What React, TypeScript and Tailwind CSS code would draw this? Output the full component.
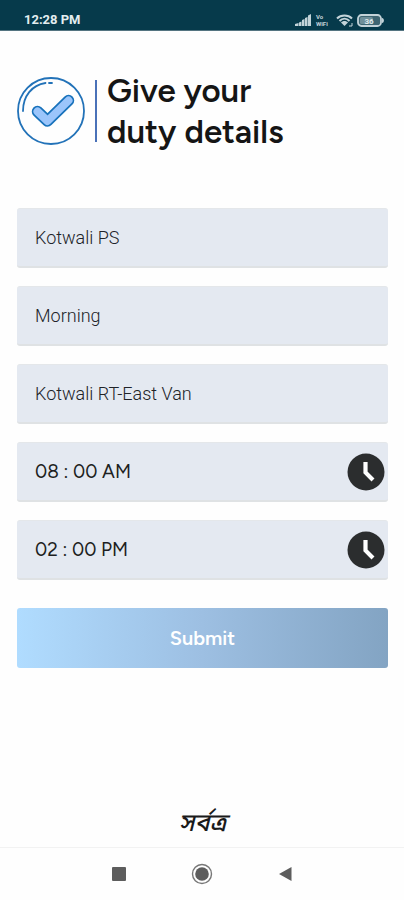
import { useState } from 'react';

interface FieldProps {
  label: string;
  value: string;
  onChange: (value: string) => void;
}

const fieldClass =
  'flex items-center h-[60px] rounded-[3px] bg-[#e4e9f1] border-t border-b-2 border-t-[#e4e7ea] border-b-[#dfe2e4]';

function TextField({ label, value, onChange }: FieldProps) {
  return (
    <div className={fieldClass}>
      <input
        type="text"
        aria-label={label}
        value={value}
        onChange={(event) => onChange(event.target.value)}
        className="w-full h-full pl-[18px] pr-4 bg-transparent outline-none font-[Roboto,sans-serif] text-[18px] font-light text-[#202328]"
      />
    </div>
  );
}

function TimeField({ label, value, onChange }: FieldProps) {
  return (
    <div className={fieldClass}>
      <input
        type="text"
        aria-label={label}
        value={value}
        onChange={(event) => onChange(event.target.value)}
        className="flex-1 min-w-0 h-full pl-[18px] bg-transparent outline-none font-[Figtree,Lato,sans-serif] text-[19px] text-[#1d1f22]"
      />
      <button type="button" aria-label={`Pick ${label}`} className="mr-[3px] cursor-pointer">
        <svg viewBox="0 0 38 38" className="w-[38px] h-[38px]">
          <circle cx="19" cy="19" r="18.5" fill="#2b2d2e" />
          <path d="M18.500 9v10.500l7.500 7.500" fill="none" stroke="#fff" strokeWidth="4.200" />
        </svg>
      </button>
    </div>
  );
}

function StatusBar() {
  return (
    <div className="flex items-center justify-between h-[31px] pt-[10px] pl-6 pr-5 bg-[#063a4b] border-b border-[#547481] text-[#e3edf0]">
      <span className="font-[Roboto,sans-serif] text-[13px] leading-5 font-bold">12:28 PM</span>
      <div className="flex items-center gap-1">
        <svg viewBox="0 0 17 12" className="w-[17px] h-3" fill="#c3d3d9">
          <path d="M0 12v-2l3.500-1v3zM4 12V8.500l2.500-1V12zM7 12V6l2.500-1v7zM10 12V4l2.500-1v9zM13 12V1.500L16 0v12z" />
        </svg>
        <div className="flex flex-col w-4 font-[Roboto,sans-serif] text-[6px] leading-[7px] font-bold text-[#c3d3d9]">
          <span>Vo</span>
          <span>WiFi</span>
        </div>
        <svg viewBox="0 0 17 13" className="w-[17px] h-[13px]" fill="none" stroke="#c3d3d9" strokeWidth="2">
          <path d="M1 4.500c4-4 11-4 15 0M3.500 7c3-3 7-3 10 0" />
          <path d="M5 8.500c2-2 5-2 7 0L8.500 12z" fill="#c3d3d9" stroke="none" />
          <path d="M13 12h3v-3" strokeWidth="1" />
        </svg>
        <svg viewBox="0 0 27 13" className="w-[27px] h-[13px]">
          <rect x="1" y="1" width="23" height="11" rx="3.500" fill="#3e6572" stroke="#c3d3d9" strokeWidth="1.800" />
          <rect x="3" y="3" width="13" height="7" rx="1.500" fill="#6f8f9a" />
          <path d="M25 4c2.500 0 2.500 5 0 5z" fill="#c3d3d9" />
          <text x="12" y="9.500" textAnchor="middle" fontFamily="Roboto, sans-serif" fontSize="8" fontWeight="700" fill="#dfe9ec">
            36
          </text>
        </svg>
      </div>
    </div>
  );
}

function CheckBadge() {
  return (
    <svg viewBox="0 0 68 68" className="w-[68px] h-[68px]" fill="none" strokeLinecap="round" strokeLinejoin="round">
      <circle cx="34" cy="34" r="33" stroke="#2272b8" strokeWidth="1.800" />
      <path d="M6 34C6 19 15 8 28.500 6M32 6h3" stroke="#2272b8" strokeWidth="1.800" />
      <path d="M20.500 34.500l10 9.500L51.500 23.500" stroke="#1872bb" strokeWidth="11.500" />
      <path d="M20.500 34.500l10 9.500L51.500 23.500" stroke="#9bc5fb" strokeWidth="8" />
    </svg>
  );
}

function NavigationBar() {
  return (
    <nav className="flex items-center justify-between h-[53px] px-[112px] border-t border-[#f2f2f2]">
      <button type="button" aria-label="Recent apps" className="cursor-pointer">
        <svg viewBox="0 0 14 14" className="w-[14px] h-[14px]">
          <rect width="14" height="14" rx="1" fill="#5d5d5d" />
        </svg>
      </button>
      <button type="button" aria-label="Home" className="cursor-pointer">
        <svg viewBox="0 0 22 22" className="w-[22px] h-[22px]">
          <circle cx="11" cy="11" r="9.500" fill="none" stroke="#777" strokeWidth="1.400" />
          <circle cx="11" cy="11" r="6.800" fill="#5d5d5d" />
        </svg>
      </button>
      <button type="button" aria-label="Back" className="cursor-pointer">
        <svg viewBox="0 0 14 16" className="w-[14px] h-4">
          <path d="M13.500 1v14L1 8z" fill="#5d5d5d" />
        </svg>
      </button>
    </nav>
  );
}

function App() {
  const [station, setStation] = useState('Kotwali PS');
  const [shift, setShift] = useState('Morning');
  const [van, setVan] = useState('Kotwali RT-East Van');
  const [startTime, setStartTime] = useState('08 : 00 AM');
  const [endTime, setEndTime] = useState('02 : 00 PM');

  return (
    <div className="flex flex-col min-h-screen bg-[#fefefe]">
      <StatusBar />
      <main className="flex-1 flex flex-col pl-[17px] pr-4 pt-[39px]">
        <header className="flex items-center">
          <CheckBadge />
          <div className="w-[2px] h-[62px] mx-[10px] bg-[#4a71b8]" />
          <h1 className="font-[Figtree,Inter,sans-serif] text-[33px] leading-[41px] font-semibold text-[#151515]">
            Give your
            <br />
            duty details
          </h1>
        </header>

        <form className="flex flex-col gap-[18px] mt-14" onSubmit={(event) => event.preventDefault()}>
          <TextField label="Police station" value={station} onChange={setStation} />
          <TextField label="Shift" value={shift} onChange={setShift} />
          <TextField label="Vehicle" value={van} onChange={setVan} />
          <TimeField label="start time" value={startTime} onChange={setStartTime} />
          <TimeField label="end time" value={endTime} onChange={setEndTime} />
          <button
            type="submit"
            className="h-[60px] mt-[10px] rounded-[3px] bg-linear-to-r from-[#b0dcff] via-[#9dbfe2] to-[#83a4c3] font-[Figtree,Inter,sans-serif] text-xl font-semibold text-white cursor-pointer"
          >
            Submit
          </button>
        </form>

        <p
          lang="bn"
          className="mt-auto mb-[6px] text-center font-['Noto_Sans_Bengali','Noto_Sans',sans-serif] text-[25px] leading-8 font-medium italic text-[#1a1a1a]"
        >
          সর্বত্র
        </p>
      </main>
      <NavigationBar />
    </div>
  );
}

export default App;
